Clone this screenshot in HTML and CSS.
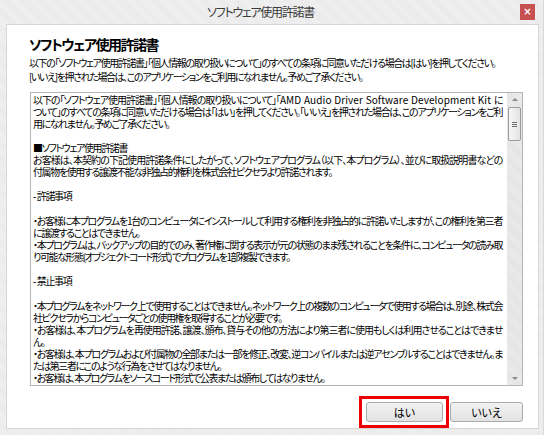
FILE: index.html
```html
<!DOCTYPE html>
<html lang="ja">
<head>
<meta charset="utf-8">
<title>ソフトウェア使用許諾書</title>
<link rel="stylesheet" href="styles.css">
</head>
<body>
<div class="window">
  <div class="titlebar">
    <span class="spacer"></span>
    <span class="title">ソフトウェア使用許諾書</span>
    <span class="close-wrap"><span class="close">×</span></span>
  </div>
  <div class="panel">
    <h1 class="heading">ソフトウェア使用許諾書</h1>
    <div class="desc">
      <div class="line full">以下の「ソフトウェア使用許諾書」「個人情報の取り扱いについて」のすべての条項に同意いただける場合は[はい]を押してください。</div>
      <div class="line">[いいえ]を押された場合は、このアプリケーションをご利用になれません。予めご了承ください。</div>
    </div>
    <div class="box">
      <div class="boxtext">
        <div class="line full">以下の「ソフトウェア使用許諾書」「個人情報の取り扱いについて」「<span class="latin">AMD Audio Driver Software Development Kit </span>に</div>
        <div class="line full">ついて」のすべての条項に同意いただける場合は「はい」を押してください。「いいえ」を押された場合は、このアプリケーションをご利</div>
        <div class="line">用になれません。予めご了承ください。</div>
        <div class="line blank"></div>
        <div class="line">■ソフトウェア使用許諾書</div>
        <div class="line full">お客様は、本契約の下記使用許諾条件にしたがって、ソフトウェアプログラム（以下、本プログラム）、並びに取扱説明書などの</div>
        <div class="line">付属物を使用する譲渡不能な非独占的権利を株式会社ピクセラより許諾されます。</div>
        <div class="line blank"></div>
        <div class="line"><span class="dash">-</span>許諾事項</div>
        <div class="line blank"></div>
        <div class="line full">・お客様に本プログラムを1台のコンピュータにインストールして利用する権利を非独占的に許諾いたしますが、この権利を第三者</div>
        <div class="line">に譲渡することはできません。</div>
        <div class="line full">・本プログラムは、バックアップの目的でのみ、著作権に関する表示が元の状態のまま残されることを条件に、コンピュータの読み取</div>
        <div class="line">り可能な形態(オブジェクトコード形式) でプログラムを1部複製できます。</div>
        <div class="line blank"></div>
        <div class="line"><span class="dash">-</span>禁止事項</div>
        <div class="line blank"></div>
        <div class="line full">・本プログラムをネットワーク上で使用することはできません。ネットワーク上の複数のコンピュータで使用する場合は、別途、株式会</div>
        <div class="line">社ピクセラからコンピュータごとの使用権を取得することが必要です。</div>
        <div class="line full">・お客様は、本プログラムを再使用許諾、譲渡、頒布、貸与その他の方法により第三者に使用もしくは利用させることはできませ</div>
        <div class="line">ん。</div>
        <div class="line full">・お客様は、本プログラムおよび付属物の全部または一部を修正、改変、逆コンパイルまたは逆アセンブルすることはできません。ま</div>
        <div class="line">たは第三者にこのような行為をさせてはなりません。</div>
        <div class="line">・お客様は、本プログラムをソースコード形式で公表または頒布してはなりません。</div>
      </div>
      <div class="scrollbar">
        <div class="arrow up"></div>
        <div class="track">
          <div class="thumb"><span class="grip"></span></div>
        </div>
        <div class="arrow down"></div>
      </div>
    </div>
    <div class="buttons">
      <div class="highlight"><button class="btn yes">はい</button></div>
      <button class="btn no">いいえ</button>
    </div>
  </div>
</div>
</body>
</html>
```
FILE: styles.css
```css
html, body {
  margin: 0;
  padding: 0;
}
body {
  width: 544px;
  height: 435px;
  overflow: hidden;
  background: #efefef;
  font-family: "Noto Sans CJK JP", "Noto Sans", sans-serif;
  color: #000;
}
.window {
  width: 544px;
  height: 435px;
  box-sizing: border-box;
  background: repeating-linear-gradient(45deg, #f1f1f1 0 1px, #e9e9e9 1px 2px);
  border-right: 1px solid #d8d8d8;
  display: flex;
  flex-direction: column;
}
.titlebar {
  height: 24px;
  display: grid;
  grid-template-columns: 1fr auto 1fr;
  align-items: center;
}
.title {
  font-size: 12px;
  color: #3a3a3a;
  line-height: 24px;
  font-feature-settings: "palt";
  letter-spacing: -1.3px;
  padding-right: 22px;
}
.close-wrap {
  justify-self: end;
  padding-right: 8px;
  display: flex;
}
.close {
  width: 15px;
  height: 16px;
  background: #c75050;
  color: #fff;
  font-size: 10px;
  line-height: 15px;
  text-align: center;
  font-weight: bold;
  font-family: "DejaVu Sans", sans-serif;
}
.panel {
  margin: 0 4px 0 6px;
  height: 405px;
  box-sizing: border-box;
  background: #fff;
  border: 1px solid #d6d6d6;
  padding: 10px 15px 0 22px;
  display: flex;
  flex-direction: column;
}
.heading {
  margin: 0;
  font-size: 14px;
  line-height: 18px;
  font-weight: bold;
  letter-spacing: -1.5px;
  font-feature-settings: "palt";
}
.desc {
  margin-top: 3px;
  width: 466px;
  font-size: 10px;
  line-height: 14px;
  letter-spacing: -1.7px;
  font-feature-settings: "palt";
}
.desc .line + .line {
  letter-spacing: -1.4px;
}
.line.full {
  text-align: justify;
  text-align-last: justify;
  text-justify: inter-character;
}
.box {
  margin-top: 8px;
  margin-left: 1px;
  width: 493px;
  height: 294px;
  box-sizing: border-box;
  border: 1px solid #b5b5b5;
  display: flex;
  overflow: hidden;
}
.boxtext {
  flex: 1;
  min-width: 0;
  padding: 1px 5px 0 2px;
  font-size: 10px;
  line-height: 12px;
  letter-spacing: -1.4px;
  font-feature-settings: "palt";
  overflow: hidden;
}
.line.blank {
  height: 12px;
}
.latin {
  letter-spacing: 0.1px;
}
.dash {
  font-family: "Liberation Sans", sans-serif;
  letter-spacing: 0.5px;
}
.scrollbar {
  width: 15px;
  flex: none;
  display: flex;
  flex-direction: column;
  background: repeating-linear-gradient(45deg, #ececec 0 1px, #e2e2e2 1px 2px);
}
.arrow {
  height: 13px;
  display: flex;
  align-items: center;
  justify-content: center;
}
.arrow::before {
  content: "";
  border-left: 3px solid transparent;
  border-right: 3px solid transparent;
}
.arrow.up::before {
  border-bottom: 3px solid #8a8a8a;
}
.arrow.down::before {
  border-top: 3px solid #8a8a8a;
}
.track {
  flex: 1;
  padding: 1px 1px 0 1px;
}
.thumb {
  height: 34px;
  box-sizing: border-box;
  border: 1px solid #9c9c9c;
  border-radius: 2px;
  background: linear-gradient(to right, #f6f6f6, #e3e3e3);
  display: flex;
  align-items: center;
  justify-content: center;
}
.grip {
  width: 5px;
  height: 5px;
  background: repeating-linear-gradient(to bottom, #6e6e6e 0 1px, transparent 1px 2px);
}
.buttons {
  margin-top: 10px;
  display: flex;
  justify-content: flex-end;
  align-items: center;
}
.highlight {
  border: 3px solid #ee0000;
  padding: 3px 3px 3px 4px;
  display: flex;
}
.btn {
  height: 20px;
  box-sizing: border-box;
  border: 1px solid #acacac;
  border-radius: 3px;
  background: linear-gradient(to bottom, #f2f2f2, #e2e2e2);
  font-family: "Noto Sans CJK JP", sans-serif;
  font-size: 11px;
  line-height: 16px;
  color: #000;
  padding: 0;
  font-feature-settings: "palt";
}
.btn.yes {
  width: 77px;
}
.btn.no {
  width: 73px;
  margin-left: 1px;
}
```
